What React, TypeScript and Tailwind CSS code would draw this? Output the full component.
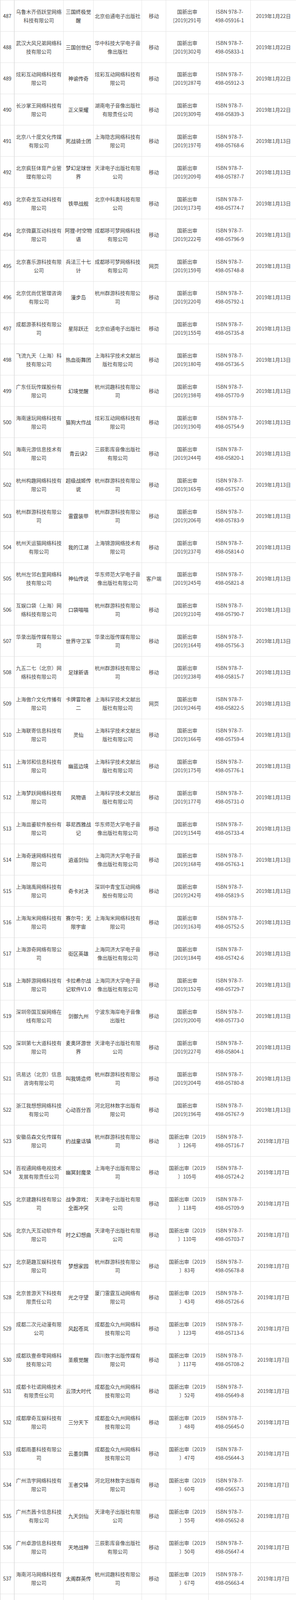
const raw = `487|乌鲁木齐佰跃堂网络科技有限公司|三国终极觉醒|北京伯通电子出版社|移动|[2019]291号|05916-1|2019年1月22日
488|武汉大风兄弟网络科技有限公司|三国创世纪|华中科技大学电子音像出版社|移动|[2019]302号|05833-1|2019年1月22日
489|炫彩互动网络科技有限公司|神谕传奇|炫彩互动网络科技有限公司|移动|[2019]287号|05912-3|2019年1月22日
490|长沙掌王网络科技有限公司|正义荣耀|湖南电子音像出版社有限责任公司|移动|[2019]309号|05839-3|2019年1月22日
491|北京八十度文化传媒有限公司|死战骑士团|上海隐志网络科技有限公司|移动|[2019]197号|05768-6|2019年1月13日
492|北京疯狂体育产业管理有限公司|梦幻足球世界|天津电子出版社有限公司|移动|[2019]209号|05787-7|2019年1月13日
493|北京奇龙互动科技有限公司|铁甲战舰|北京中科奥科技有限公司|移动|[2019]173号|05774-7|2019年1月13日
494|北京微赢互动科技有限公司|阿狸-时空物语|成都哆可梦网络科技有限公司|移动|[2019]222号|05796-9|2019年1月13日
495|北京喜乐游科技有限公司|兵法三十七计|成都哆可梦网络科技有限公司|网页|[2019]159号|05748-8|2019年1月13日
496|北京优尚优管理咨询有限公司|漫步岛|杭州群游科技有限公司|移动|[2019]220号|05792-1|2019年1月13日
497|成都游荼科技有限公司|星际跃迁|北京伯通电子出版社|移动|[2019]155号|05735-8|2019年1月13日
498|飞流九天（上海）科技有限公司|热血街舞团|上海科学技术文献出版社有限公司|移动|[2019]180号|05736-5|2019年1月13日
499|广东任玩传媒股份有限公司|幻境觉醒|杭州润趣科技有限公司|移动|[2019]198号|05770-9|2019年1月13日
500|海南速玩网络科技有限公司|猫狗大作战|炫彩互动网络科技有限公司|移动|[2019]190号|05754-9|2019年1月13日
501|海南元游信息技术有限公司|青云诀2|三辰影库音像出版社有限公司|移动|[2019]244号|05820-1|2019年1月13日
502|杭州构趣网络科技有限公司|超级战姬传说|杭州群游科技有限公司|移动|[2019]165号|05757-0|2019年1月13日
503|杭州群游科技有限公司|雷霆装甲|杭州群游科技有限公司|移动|[2019]206号|05783-9|2019年1月13日
504|杭州天运猫网络科技有限公司|我的江湖|上海锦游网络技术有限公司|移动|[2019]237号|05814-0|2019年1月13日
505|杭州左邻右里网络科技有限公司|神仙传说|华东师范大学电子音像出版社有限公司|客户端|[2019]245号|05821-8|2019年1月13日
506|互娱口袋（上海）网络科技有限公司|口袋喵喵|杭州群游科技有限公司|移动|[2019]210号|05790-7|2019年1月13日
507|华录出版传媒有限公司|世界守卫军|华录出版传媒有限公司|移动|[2019]164号|05756-3|2019年1月13日
508|九五二七（北京）网络科技有限公司|足球新语|杭州群游科技有限公司|移动|[2019]238号|05815-7|2019年1月13日
509|上海傲介文化传播有限公司|卡牌冒险者二|上海科学技术文献出版社有限公司|网页|[2019]246号|05822-5|2019年1月13日
510|上海联寄信息科技有限公司|灵仙|上海科学技术文献出版社有限公司|移动|[2019]166号|05759-4|2019年1月13日
511|上海邻和信息科技有限公司|幽蓝边境|上海科学技术文献出版社有限公司|移动|[2019]175号|05776-1|2019年1月13日
512|上海梦跃网络科技有限公司|风物语|上海科学技术文献出版社有限公司|移动|[2019]177号|05731-0|2019年1月13日
513|上海皿鎏软件股份有限公司|菲尼西雅战记|华东师范大学电子音像出版社有限公司|移动|[2019]154号|05733-4|2019年1月13日
514|上海奇速网络科技有限公司|逍遥剑仙|上海同济大学电子音像出版社有限公司|移动|[2019]168号|05763-1|2019年1月13日
515|上海瑞禹网络科技有限公司|奇卡对决|深圳中青宝互动网络股份有限公司|移动|[2019]242号|05819-5|2019年1月13日
516|上海淘米网络科技有限公司|赛尔号：无限宇宙|上海淘米网络科技有限公司|移动|[2019]163号|05752-5|2019年1月13日
517|上海游奇网络有限公司|街区英雄|上海同济大学电子音像出版社有限公司|移动|[2019]184号|05742-6|2019年1月13日
518|上海醉游网络科技有限公司|卡拉希尔战记软件V1.0|上海同济大学电子音像出版社有限公司|移动|[2019]152号|05729-7|2019年1月13日
519|深圳帝国互娱网络在线有限公司|剑御九州|宁波东海岸电子音像出版社|移动|[2019]200号|05773-0|2019年1月13日
520|深圳第七大道科技有限公司|麦奥环游世界|天津电子出版社有限公司|移动|[2019]227号|05804-1|2019年1月13日
521|讯易达（北京）信息咨询有限公司|叫我铸造师|杭州群游科技有限公司|移动|[2019]204号|05780-8|2019年1月13日
522|浙江我想想网络科技有限公司|心动百分百|河北冠林数字出版有限公司|移动|[2019]196号|05767-9|2019年1月13日
523|安徽岳森文化传媒有限公司|约战童话镇|杭州群游科技有限公司|移动|〔2019〕126号|05716-7|2019年1月7日
524|百视通网络电视技术发展有限责任公司|幽冥封魔录|上海电子出版有限公司|移动|〔2019〕105号|05724-2|2019年1月7日
525|北京建趣科技有限公司|战争游戏：全面冲突|天津电子出版社有限公司|移动|〔2019〕118号|05709-9|2019年1月7日
526|北京九天互动软件有限公司|时之幻想曲|天津电子出版社有限公司|移动|〔2019〕110号|05703-7|2019年1月7日
527|北京葩趣互娱科技有限公司|梦想家园|杭州群游科技有限公司|移动|〔2019〕83号|05678-8|2019年1月7日
528|北京普游天下科技有限责任公司|光之守望|厦门雷霆互动网络有限公司|移动|〔2019〕43号|05726-6|2019年1月7日
529|成都二次元动漫有限公司|风起苍岚|成都盈众九州网络科技有限公司|移动|〔2019〕123号|05713-6|2019年1月7日
530|成都玖壹叁零网络科技有限公司|圣痕觉醒|四川数字出版传媒有限公司|移动|〔2019〕117号|05708-2|2019年1月7日
531|成都卡社诺网络技术有限责任公司|云顶大时代|成都盈众九州网络科技有限公司|移动|〔2019〕52号|05649-8|2019年1月7日
532|成都摩奇互娱科技有限公司|三分天下|成都盈众九州网络科技有限公司|移动|〔2019〕48号|05645-0|2019年1月7日
533|成都雨墨科技有限公司|云墨剑舞|成都盈众九州网络科技有限公司|移动|〔2019〕47号|05644-3|2019年1月7日
534|广州浩宇网络科技有限公司|王者交锋|河北冠林数字出版有限公司|移动|〔2019〕60号|05657-3|2019年1月7日
535|广州杰茜卡信息科技有限公司|九天剑仙|天津电子出版社有限公司|移动|〔2019〕55号|05652-8|2019年1月7日
536|广州卓游信息科技有限公司|天地战神|三辰影库音像出版社有限公司|移动|〔2019〕50号|05647-4|2019年1月7日
537|海南河马网络科技有限公司|太阁群英传|杭州润趣科技有限公司|移动|〔2019〕67号|05663-4|2019年1月7日
538|海南奇遇天下网络科技有限公司|暗影战姬|杭州群游科技有限公司|移动|〔2019〕45号|05728-0|2019年1月7日
539|海南趣海信息科技有限公司|仙境苍穹|杭州群游科技有限公司|移动|〔2019〕80号|05675-7|2019年1月7日
540|杭州天卓网络有限公司|倾国之怒|天津电子出版社有限公司|网页|〔2019〕69号|05665-8|2019年1月7日
541|霍尔果斯云起互娱科技有限公司|剑与江山|杭州润趣科技有限公司|移动|〔2019〕58号|05655-9|2019年1月7日
542|江苏甲子网络科技股份有限公司|超次元大海战|上海同济大学电子音像出版社有限公司|移动|〔2019〕119号|05710-5|2019年1月7日
543|青岛远硕信息科技发展有限公司|文明岔口|天津电子出版社有限公司|移动|〔2019〕128号|05718-1|2019年1月7日
544|厦门比悦网络科技有限公司|猜猜谁说谎|杭州润趣科技有限公司|移动|〔2019〕82号|05677-1|2019年1月7日
545|厦门云域网络科技有限公司|黑暗城堡|厦门雷霆互动网络有限公司|移动|〔2019〕127号|05717-4|2019年1月7日
546|汕头市天域网络科技开发有限公司|飞吧西游|北京伯通电子出版社|移动|〔2019〕81号|05676-4|2019年1月7日
547|上海犇玩信息科技有限公司|超次元觉醒|华东师范大学电子音像出版社有限公司|移动|〔2019〕86号|05681-8|2019年1月7日
548|上海捷勋网络科技有限公司|暴走大侠|杭州润趣科技有限公司|移动|〔2019〕75号|05671-9|2019年1月7日
549|上海玄云网络科技有限公司|幻影战争|上海科学技术文献出版社有限公司|移动|〔2019〕99号|05693-1|2019年1月7日
550|上海有间信息科技有限公司|空岛幻想|华东师范大学电子音像出版社有限公司|移动|〔2019〕104号|05698-6|2019年1月7日
551|深圳大象互娱科技有限公司|守卫王权|北京科海电子出版社|移动|〔2019〕73号|05669-6|2019年1月7日
552|深圳市快订科技有限公司|保卫我的家园|炫彩互动网络科技有限公司|移动|〔2019〕57号|05654-2|2019年1月7日
553|深圳市三格软件科技有限公司|主宰仙侠|北京华网汇通技术服务有限公司|移动|〔2019〕68号|05664-1|2019年1月7日
554|深圳市中顺和盈科技有限公司|九州江湖情|三辰影库音像出版社有限公司|移动|〔2019〕51号|05648-1|2019年1月7日
555|苏州乐贝网络科技有限公司|石器纪元|上海电子出版有限公司|移动|〔2019〕59号|05656-6|2019年1月7日
556|掌游天下（北京）信息技术股份有限公司|原始旅程|北京幻方朗睿软件科技有限公司|移动|〔2019〕89号|05684-9|2019年1月7日
557|浙江合贵网络科技有限公司|封神归来|北京伯通电子出版社|移动|〔2019〕70号|05666-5|2019年1月7日
558|北京呈天网络科技股份有限公司|绝地三国|人民东方出版传媒有限公司|移动|[2018]1249号|05572-9|2018年12月29日
559|北京目标在线科技有限公司|傲世三国|北京目标在线科技有限公司|移动|[2018]1245号|05588-0|2018年12月29日
560|北京奉云科技有限公司|宇宙战舰|黑龙江龙华数字出版股份有限公司|移动|[2018]1294号|05635-1|2018年12月29日
561|北京天赐之恒网络科技有限公司|元气大冒险|人民东方出版传媒有限公司|移动|[2018]1221号|05561-3|2018年12月29日
562|北京卓韵天下科技有限公司|兵法三十七计|四川数字出版传媒有限公司|移动|[2018]1234号|05577-4|2018年12月29日
563|成都魔法天堂科技有限公司|玛法世界手游|华东师范大学电子音像出版社有限公司|移动|[2018]1265号|05600-9|2018年12月29日
564|佛山市明茂网络科技有限公司|天灵诀|河北冠林数字出版有限公司|移动|[2018]1279号|05615-3|2018年12月29日
565|福州指尖互娱网络科技有限公司|喵喵爱冒险|厦门雷霆互动网络有限公司|移动|[2018]1261号|05633-7|2018年12月29日
566|广州猫玩网络科技有限公司|决战朝歌|北京中电电子出版社|移动|[2018]1277号|05613-9|2018年12月29日`;

const rows = raw.split('\n').map(line => line.split('|'));

const cell = 'flex items-center justify-center text-center border-r border-b border-[#e4e4e4] px-[2px]';

// approval number: bracket style decides where the line breaks
function approvalLines(a: string): [string, string] {
  if (a.startsWith('〔')) return ['国新出审' + a.slice(0, 5), a.slice(5)];
  return ['国新出审', a];
}

export default function App() {
  return (
    <div className="w-[759px] bg-white text-[13px] leading-[22px] text-[#4a4a4a] font-['Noto_Sans_CJK_SC','Liberation_Sans',sans-serif] border-t border-[#e4e4e4]">
      {rows.map(([no, company, game, publisher, kind, approval, isbn, date]) => {
        const [a1, a2] = approvalLines(approval);
        return (
          <div key={no} className="grid h-[80px] grid-cols-[37px_126px_77px_124px_62px_109px_108px_116px]">
            <div className="flex items-center justify-center border-b border-l border-r border-b-[#e4e4e4] border-l-[#d2d2d2] border-r-[#c8c8c8] text-[#3a3a3a]">
              {no}
            </div>
            <div className={cell}>{company}</div>
            <div className={`${cell} text-[#333]`}>{game}</div>
            <div className={cell}>{publisher}</div>
            <div className={cell}>{kind}</div>
            <div className={`${cell} flex-col`}>
              <span className="whitespace-nowrap">{a1}</span>
              <span className="whitespace-nowrap">{a2}</span>
            </div>
            <div className={`${cell} flex-col`}>
              <span className="whitespace-nowrap">ISBN 978-7-</span>
              <span className="whitespace-nowrap">498-{isbn}</span>
            </div>
            <div className="flex items-center justify-center border-b border-[#e4e4e4] whitespace-nowrap">{date}</div>
          </div>
        );
      })}
    </div>
  );
}
